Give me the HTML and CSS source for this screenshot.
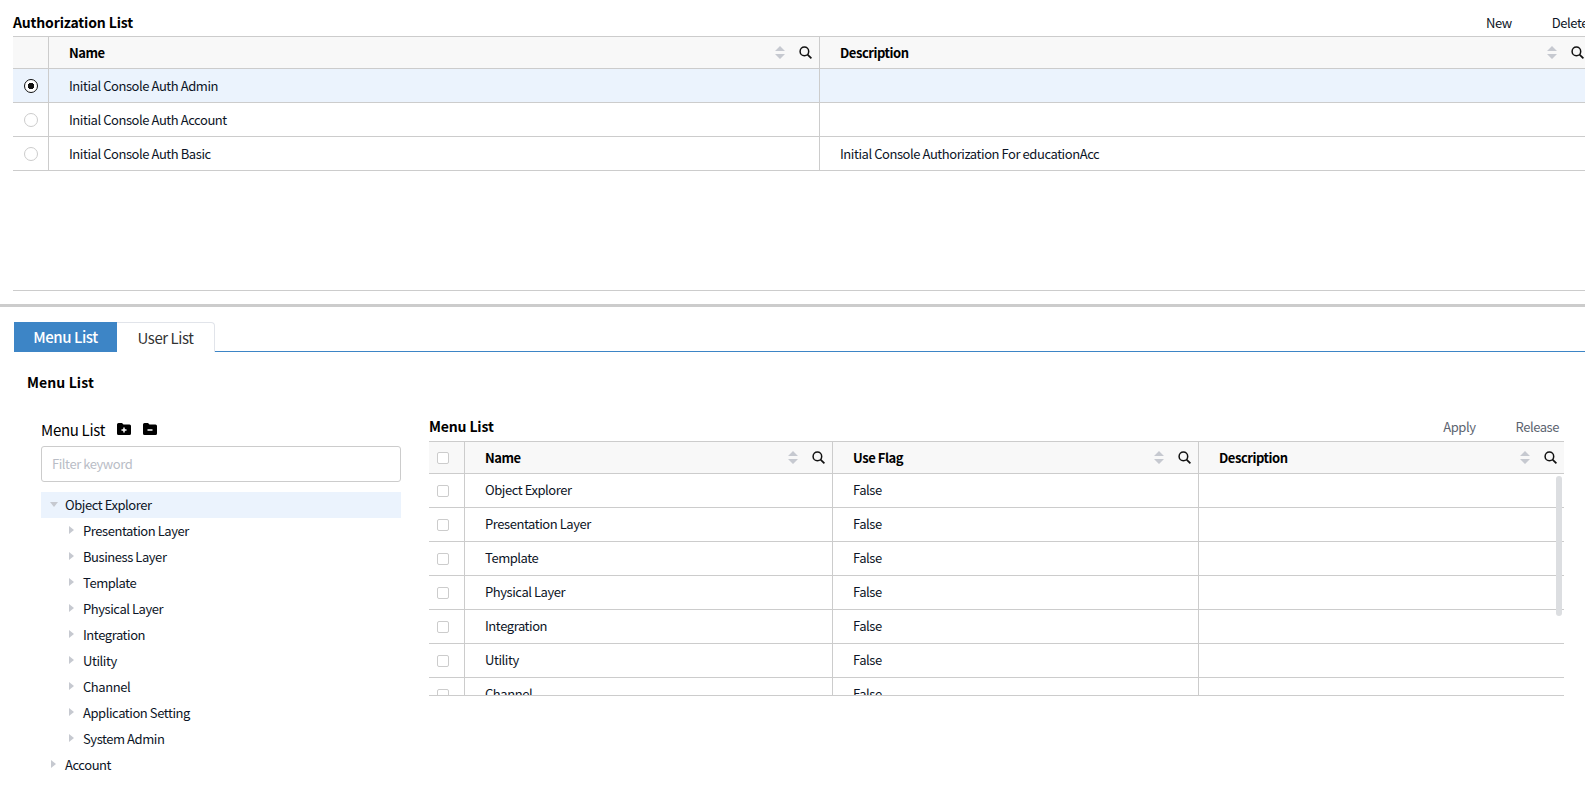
FILE: index.html
```html
<!DOCTYPE html>
<html lang="en">
<head>
    <meta charset="UTF-8">
    <meta name="viewport" content="width=device-width, initial-scale=1.0">
    <title>Authorization List</title>
    <link rel="stylesheet" href="styles.css">
</head>
<body>
    <svg class="defs" width="0" height="0">
        <symbol id="sort" viewBox="0 0 10 13"><path d="M5 0l5 5H0zM5 13L0 8h10z" fill="#c6c9d0"/></symbol>
        <symbol id="search" viewBox="0 0 13 13"><circle cx="5.4" cy="5.4" r="4.3" fill="none" stroke="#111" stroke-width="1.5"/><path d="M8.6 8.6L12.4 12.4" stroke="#111" stroke-width="1.7"/></symbol>
    </svg>

    <section class="auth">
        <div class="toolbar">
            <h2 class="title">Authorization List</h2>
            <div class="actions">
                <span>New</span>
                <span>Delete</span>
            </div>
        </div>
        <div class="grid auth-grid">
            <div class="row head">
                <div class="cell"></div>
                <div class="cell pad"><span class="label">Name</span><svg class="sort"><use href="#sort"/></svg><svg class="search"><use href="#search"/></svg></div>
                <div class="cell pad"><span class="label">Description</span><svg class="sort"><use href="#sort"/></svg><svg class="search"><use href="#search"/></svg></div>
            </div>
            <div class="row selected">
                <div class="cell center"><span class="radio on"></span></div>
                <div class="cell pad">Initial Console Auth Admin</div>
                <div class="cell pad"></div>
            </div>
            <div class="row">
                <div class="cell center"><span class="radio"></span></div>
                <div class="cell pad">Initial Console Auth Account</div>
                <div class="cell pad"></div>
            </div>
            <div class="row">
                <div class="cell center"><span class="radio"></span></div>
                <div class="cell pad">Initial Console Auth Basic</div>
                <div class="cell pad">Initial Console Authorization For educationAcc</div>
            </div>
        </div>
    </section>

    <section class="lower">
        <div class="tabs">
            <div class="tab active">Menu List</div>
            <div class="tab">User List</div>
        </div>
        <h2 class="title panel-title">Menu List</h2>

        <div class="columns">
            <div class="tree-panel">
                <div class="tree-head">
                    <span class="tree-title">Menu List</span>
                    <svg class="folder" viewBox="0 0 14 12"><path d="M1.5 0H5l1.500 1.600h6A1.500 1.500 0 0 1 14 3.100v7.400A1.500 1.500 0 0 1 12.500 12h-11A1.500 1.500 0 0 1 0 10.500v-9A1.500 1.500 0 0 1 1.500 0z"/><path d="M7 4.500v5M4.500 7h5" stroke="#fff" stroke-width="1.500"/></svg>
                    <svg class="folder" viewBox="0 0 14 12"><path d="M1.5 0H5l1.500 1.600h6A1.500 1.500 0 0 1 14 3.100v7.400A1.500 1.500 0 0 1 12.500 12h-11A1.500 1.500 0 0 1 0 10.500v-9A1.500 1.500 0 0 1 1.500 0z"/><path d="M4.500 7h5" stroke="#fff" stroke-width="1.500"/></svg>
                </div>
                <input class="filter" type="text" placeholder="Filter keyword">
                <ul class="tree">
                    <li class="node current"><span class="arrow down"></span>Object Explorer</li>
                    <li class="node child"><span class="arrow"></span>Presentation Layer</li>
                    <li class="node child"><span class="arrow"></span>Business Layer</li>
                    <li class="node child"><span class="arrow"></span>Template</li>
                    <li class="node child"><span class="arrow"></span>Physical Layer</li>
                    <li class="node child"><span class="arrow"></span>Integration</li>
                    <li class="node child"><span class="arrow"></span>Utility</li>
                    <li class="node child"><span class="arrow"></span>Channel</li>
                    <li class="node child"><span class="arrow"></span>Application Setting</li>
                    <li class="node child"><span class="arrow"></span>System Admin</li>
                    <li class="node root"><span class="arrow"></span>Account</li>
                </ul>
            </div>

            <div class="list-panel">
                <div class="toolbar list-toolbar">
                    <h2 class="title">Menu List</h2>
                    <div class="actions muted">
                        <span>Apply</span>
                        <span>Release</span>
                    </div>
                </div>
                <div class="grid menu-grid">
                    <div class="row head">
                        <div class="cell check-cell"><span class="check"></span></div>
                        <div class="cell pad"><span class="label">Name</span><svg class="sort"><use href="#sort"/></svg><svg class="search"><use href="#search"/></svg></div>
                        <div class="cell pad"><span class="label">Use Flag</span><svg class="sort"><use href="#sort"/></svg><svg class="search"><use href="#search"/></svg></div>
                        <div class="cell pad"><span class="label">Description</span><svg class="sort"><use href="#sort"/></svg><svg class="search"><use href="#search"/></svg></div>
                    </div>
                    <div class="row"><div class="cell check-cell"><span class="check"></span></div><div class="cell pad">Object Explorer</div><div class="cell pad">False</div><div class="cell pad"></div></div>
                    <div class="row"><div class="cell check-cell"><span class="check"></span></div><div class="cell pad">Presentation Layer</div><div class="cell pad">False</div><div class="cell pad"></div></div>
                    <div class="row"><div class="cell check-cell"><span class="check"></span></div><div class="cell pad">Template</div><div class="cell pad">False</div><div class="cell pad"></div></div>
                    <div class="row"><div class="cell check-cell"><span class="check"></span></div><div class="cell pad">Physical Layer</div><div class="cell pad">False</div><div class="cell pad"></div></div>
                    <div class="row"><div class="cell check-cell"><span class="check"></span></div><div class="cell pad">Integration</div><div class="cell pad">False</div><div class="cell pad"></div></div>
                    <div class="row"><div class="cell check-cell"><span class="check"></span></div><div class="cell pad">Utility</div><div class="cell pad">False</div><div class="cell pad"></div></div>
                    <div class="row"><div class="cell check-cell"><span class="check"></span></div><div class="cell pad">Channel</div><div class="cell pad">False</div><div class="cell pad"></div></div>
                    <div class="scrollbar"></div>
                </div>
            </div>
        </div>
    </section>
</body>
</html>
```

FILE: styles.css
```css
* {
    box-sizing: border-box;
}

html, body {
    margin: 0;
    height: 788px;
    overflow: hidden;
}

body {
    width: 1585px;
    font-family: "Noto Sans CJK KR", "Noto Sans", sans-serif;
    font-size: 13px;
    letter-spacing: -0.44px;
    color: #0c1526;
    background-color: #fff;
}

.defs {
    position: absolute;
}

.title {
    margin: 0;
    font-size: 14px;
    font-weight: 700;
    letter-spacing: -0.15px;
    color: #000;
}

.toolbar {
    display: flex;
    justify-content: space-between;
    align-items: center;
}

.actions {
    display: flex;
    gap: 40px;
}

.actions.muted {
    color: #5c6470;
    padding-right: 5px;
}

/* top list */
.auth {
    height: 307px;
    padding-left: 13px;
    border-bottom: 3px solid #ccc;
}

.auth .toolbar {
    width: 1575px;
    height: 36px;
    padding-top: 8px;
}

.auth-grid {
    width: 1578px;
    height: 255px;
    border-bottom: 1px solid #ccc;
}

.auth-grid .row {
    grid-template-columns: 36px 771px 771px;
}

/* grids */
.grid {
    position: relative;
    overflow: hidden;
    border-top: 1px solid #ccc;
}

.row {
    display: grid;
    height: 34px;
    border-bottom: 1px solid #ccc;
}

.row.head {
    height: 32px;
    background-color: #f8f8f8;
    font-weight: 700;
    letter-spacing: -0.45px;
    color: #000;
}

.row.selected {
    background-color: #ebf3fd;
}

.cell {
    display: flex;
    align-items: center;
    border-right: 1px solid #ccc;
    min-width: 0;
}

.cell:last-child {
    border-right: none;
}

.cell.center {
    justify-content: center;
}

.cell.check-cell {
    padding-left: 8px;
}

.cell.pad {
    padding-left: 20px;
    padding-right: 7px;
}

.menu-grid .row:not(.head) .cell.pad {
    padding-bottom: 2px;
}

.label {
    flex: 1;
}

.sort {
    width: 10px;
    height: 13px;
    margin-right: 14px;
}

.search {
    width: 13px;
    height: 13px;
}

.radio {
    width: 14px;
    height: 14px;
    border: 1px solid #ccc;
    border-radius: 50%;
    background-color: #fff;
}

.radio.on {
    border-color: #111;
    background: radial-gradient(circle, #111 0, #111 3px, #fff 3.5px);
}

.check {
    width: 12px;
    height: 12px;
    border: 1px solid #ccc;
    border-radius: 2px;
    background-color: #fff;
}

/* lower part */
.lower {
    padding-top: 15px;
}

.tabs {
    display: flex;
    height: 30px;
    margin-left: 14px;
    border-bottom: 1px solid #3d85c6;
}

.tab {
    width: 98px;
    height: 30px;
    border: 1px solid #e1e4ea;
    border-left: none;
    border-bottom: none;
    border-radius: 0 4px 0 0;
    font-size: 15px;
    line-height: 29px;
    text-align: center;
    color: #333;
    background-color: #fff;
}

.tab.active {
    width: 103px;
    border: none;
    border-radius: 0;
    background-color: #3d85c6;
    font-weight: 500;
    color: #fff;
}

.panel-title {
    height: 20px;
    margin: 20px 0 0 27px;
    line-height: 20px;
    letter-spacing: 0.1px;
}

.columns {
    display: flex;
    padding-left: 41px;
    padding-top: 27px;
}

/* tree */
.tree-panel {
    width: 360px;
    margin-right: 28px;
}

.tree-head {
    display: flex;
    align-items: center;
    height: 20px;
}

.tree-title {
    width: 76px;
    font-size: 15px;
    letter-spacing: -0.3px;
    color: #000;
}

.folder {
    width: 14px;
    height: 12px;
    margin-right: 12px;
    fill: #000;
}

.filter {
    display: block;
    width: 100%;
    height: 36px;
    margin-top: 7px;
    padding: 0 10px 2px;
    border: 1px solid #ccc;
    border-radius: 3px;
    font: inherit;
    letter-spacing: inherit;
    outline: none;
}

.filter::placeholder {
    color: #b9bdc6;
}

.tree {
    list-style: none;
    margin: 10px 0 0;
    padding: 0;
}

.node {
    display: flex;
    align-items: center;
    height: 26px;
    padding-left: 9px;
    padding-bottom: 2px;
}

.node.current {
    background-color: #ebf3fd;
}

.node.child {
    padding-left: 28px;
}

.node.root {
    padding-left: 10px;
}

.arrow {
    width: 0;
    height: 0;
    margin-right: 9px;
    border-style: solid;
    border-width: 4px 0 4px 5px;
    border-color: transparent transparent transparent #c6c9d0;
}

.arrow.down {
    margin-right: 7px;
    border-width: 5px 4px 0 4px;
    border-color: #c6c9d0 transparent transparent transparent;
}

/* right list */
.list-panel {
    width: 1135px;
}

.list-toolbar {
    height: 30px;
    margin-top: -8px;
}

.menu-grid {
    height: 255px;
    border-bottom: 1px solid #ccc;
}

.menu-grid .row {
    grid-template-columns: 36px 368px 366px 365px;
}

.scrollbar {
    position: absolute;
    top: 34px;
    right: 2px;
    width: 6px;
    height: 140px;
    border-radius: 3px;
    background-color: #dcdee1;
}
```
